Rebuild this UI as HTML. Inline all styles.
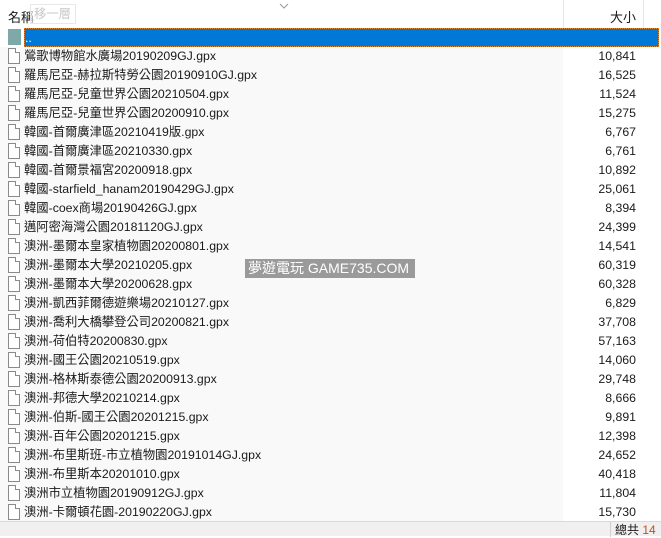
<!DOCTYPE html>
<html><head><meta charset="utf-8"><style>
*{margin:0;padding:0;box-sizing:border-box}
body{width:661px;height:536px;overflow:hidden;background:#fff;font-family:"Liberation Sans","Noto Sans CJK TC",sans-serif;font-size:12.3px;color:#1a1a1a;position:relative}
.hdr{position:absolute;left:0;top:0;width:661px;height:28px;background:#fff}
.hdr .vl{position:absolute;top:0;height:28px;border-left:1px solid #e5e5e5}
.list{position:absolute;left:0;top:28px;width:661px;height:493px;background:#fff}
.namebg{position:absolute;left:0;top:47px;width:563px;height:474px;background:#f9f9f9}
.row{position:absolute;left:0;width:661px;height:19px;line-height:19px;white-space:nowrap}
.row .n{position:absolute;left:24px;top:0}
.row .s{position:absolute;right:25px;top:0}
.ic{position:absolute;left:8px;top:1px;width:12px;height:16px;border:1px solid #8a8a8a;background:#fff}
.ic:after{content:"";position:absolute;right:-1px;top:-1px;width:4px;height:4px;background:#fff;border-left:1px solid #8a8a8a;border-bottom:1px solid #8a8a8a}
.sel{background:#0078d7;border:1px dotted #e08a3a;color:#fff}
.status{position:absolute;left:0;top:521px;width:661px;height:15px;background:#f0f0f0;border-top:1px solid #d9d9d9}
.wm{position:absolute;left:245px;top:259px;width:170px;height:19px;background:#9a9a9a;color:#fff;font-size:14px;line-height:19px;padding-left:3px;white-space:nowrap}
</style></head><body>
<div class="hdr">
<div class="vl" style="left:563px"></div><div class="vl" style="left:643px"></div>
<div style="position:absolute;left:8px;top:7px;font-size:13px">名稱</div>
<div style="position:absolute;left:30px;top:4px;width:46px;height:20px;border:1px solid #e8e8e8;color:#c8c8c8;padding-left:3px;line-height:18px;background:rgba(255,255,255,.6)">移一層</div>
<div style="position:absolute;right:25px;top:7px;font-size:13px">大小</div>
<svg style="position:absolute;left:279px;top:3px" width="10" height="6"><path d="M1 1 L5 5 L9 1" stroke="#999" fill="none"/></svg>
</div>
<div class="list"></div>
<div class="namebg"></div>
<div class="row sel" style="top:28px;left:24px;width:635px"><span style="position:absolute;left:0;top:0">..</span></div>
<div style="position:absolute;left:8px;top:29px;width:13px;height:16px;background:#7fa9a9"></div>
<div id="rows"></div>
<div class="wm">夢遊電玩 GAME735.COM</div>
<div class="status">
<div style="position:absolute;left:610px;top:0;height:15px;border-left:1px solid #d0d0d0"></div>
<div style="position:absolute;left:615px;top:0;font-size:12px;line-height:16px;white-space:nowrap">總共 <span style="color:#c05020">14</span></div>
</div>
<script>
var d=[["鶯歌博物館水廣場20190209GJ.gpx","10,841"],["羅馬尼亞-赫拉斯特勞公園20190910GJ.gpx","16,525"],["羅馬尼亞-兒童世界公園20210504.gpx","11,524"],["羅馬尼亞-兒童世界公園20200910.gpx","15,275"],["韓國-首爾廣津區20210419版.gpx","6,767"],["韓國-首爾廣津區20210330.gpx","6,761"],["韓國-首爾景福宮20200918.gpx","10,892"],["韓國-starfield_hanam20190429GJ.gpx","25,061"],["韓國-coex商場20190426GJ.gpx","8,394"],["邁阿密海灣公園20181120GJ.gpx","24,399"],["澳洲-墨爾本皇家植物園20200801.gpx","14,541"],["澳洲-墨爾本大學20210205.gpx","60,319"],["澳洲-墨爾本大學20200628.gpx","60,328"],["澳洲-凱西菲爾德遊樂場20210127.gpx","6,829"],["澳洲-喬利大橋攀登公司20200821.gpx","37,708"],["澳洲-荷伯特20200830.gpx","57,163"],["澳洲-國王公園20210519.gpx","14,060"],["澳洲-格林斯泰德公園20200913.gpx","29,748"],["澳洲-邦德大學20210214.gpx","8,666"],["澳洲-伯斯-國王公園20201215.gpx","9,891"],["澳洲-百年公園20201215.gpx","12,398"],["澳洲-布里斯班-市立植物園20191014GJ.gpx","24,652"],["澳洲-布里斯本20201010.gpx","40,418"],["澳洲市立植物園20190912GJ.gpx","11,804"],["澳洲-卡爾頓花園-20190220GJ.gpx","15,730"]];
var h="";for(var i=0;i<d.length;i++){h+='<div class="row" style="top:'+(47+i*19)+'px"><div class="ic"></div><span class="n">'+d[i][0]+'</span><span class="s">'+d[i][1]+'</span></div>';}
document.getElementById("rows").innerHTML=h;
</script>
</body></html>
